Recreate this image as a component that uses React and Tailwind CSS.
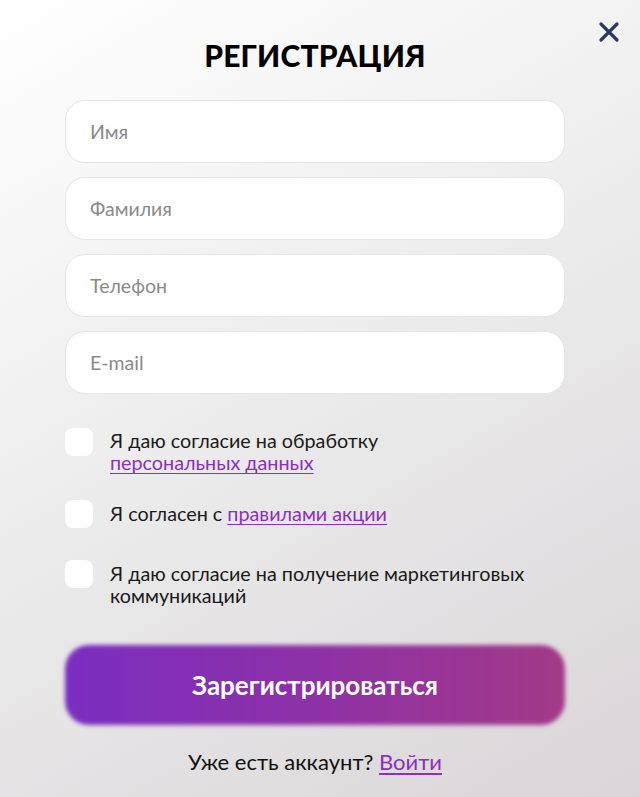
export default function App() {
  const inputs = ["Имя", "Фамилия", "Телефон", "E-mail"];
  return (
    <div
      className="relative w-[640px] h-[797px] overflow-hidden bg-[linear-gradient(150deg,#ffffff_0%,#efefef_40%,#d9d5d8_100%)]"
      style={{ fontFamily: "Lato, 'Noto Sans', sans-serif" }}
    >
      <button className="absolute right-[20px] top-[21px] w-[22px] h-[22px] flex items-center justify-center">
        <svg width="22" height="22" viewBox="0 0 22 22" fill="none">
          <path d="M3 3L19 19M19 3L3 19" stroke="#2d3a5a" strokeWidth="3.2" strokeLinecap="round" />
        </svg>
      </button>
      <div className="flex flex-col w-[500px] ml-[65px] pt-[36px]">
        <h1 className="text-[30px] leading-[38px] font-black text-black tracking-[0.2px] text-center">РЕГИСТРАЦИЯ</h1>
        <div className="flex flex-col gap-[14px] mt-[26px] w-[500px]">
          {inputs.map((p) => (
            <input
              key={p}
              placeholder={p}
              className="w-full h-[63px] rounded-[20px] bg-white border border-[#e6e6e6] px-[24px] text-[19.5px] text-black placeholder:text-[#8a8a8a] outline-none"
              style={{ fontFamily: "Lato, sans-serif" }}
            />
          ))}
        </div>
        <div className="w-[500px] mt-[34px] flex flex-col">
          <label className="flex items-start gap-[17px]">
            <span className="w-[28px] h-[28px] rounded-[8px] bg-white shrink-0"></span>
            <span className="text-[19.75px] leading-[22px] text-[#1a1a1a] pt-[2px]">
              Я даю согласие на обработку<br />
              <a href="#" className="text-[#8a2fc0] underline underline-offset-[3px]">персональных данных</a>
            </span>
          </label>
          <label className="flex items-center gap-[17px] mt-[26px]">
            <span className="w-[28px] h-[28px] rounded-[8px] bg-white shrink-0"></span>
            <span className="text-[19.75px] leading-[22px] text-[#1a1a1a]">
              Я согласен с{" "}
              <a href="#" className="text-[#8a2fc0] underline underline-offset-[3px]">правилами акции</a>
            </span>
          </label>
          <label className="flex items-start gap-[17px] mt-[32px]">
            <span className="w-[28px] h-[28px] rounded-[8px] bg-white shrink-0"></span>
            <span className="text-[19.75px] leading-[22px] text-[#1a1a1a] pt-[3px]">
              Я даю согласие на получение маркетинговых<br />коммуникаций
            </span>
          </label>
        </div>
        <button className="relative mt-[38px] w-[500px] h-[80px] text-white text-[26px] font-bold">
          <span className="absolute inset-0 rounded-[24px] bg-[linear-gradient(90deg,#7a2ec0_0%,#8d31a6_50%,#a33a88_100%)] blur-[2px]"></span>
          <span className="relative">Зарегистрироваться</span>
        </button>
        <p className="mt-[24px] text-[22px] leading-[26px] text-[#111] text-center">
          Уже есть аккаунт?{" "}
          <a href="#" className="text-[#8a2fc0] underline underline-offset-[3px]">Войти</a>
        </p>
      </div>
    </div>
  );
}
